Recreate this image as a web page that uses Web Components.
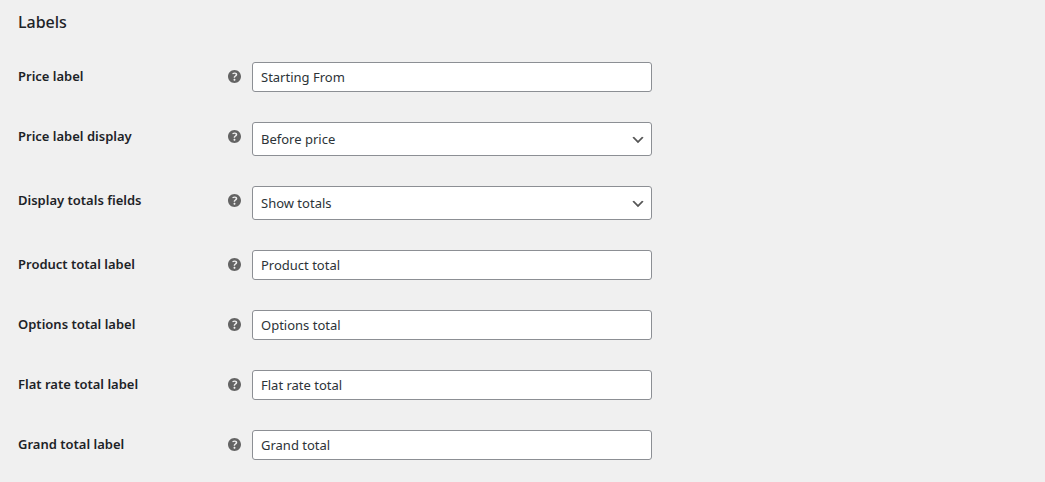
<!DOCTYPE html>
<html lang="en">
<head>
<meta charset="utf-8">
<meta name="viewport" content="width=device-width, initial-scale=1">
<title>Labels</title>
<style>
body { margin: 0; background: #f0f0f0; color: #1d2327; font-family: "Segoe UI", "Noto Sans", "Open Sans", sans-serif; font-size: 13px; }
</style>
</head>
<body>
<settings-section heading="Labels">
  <settings-field name="price_label" label="Price label" value="Starting From"></settings-field>
  <settings-field name="price_display" label="Price label display" options="Before price|After price"></settings-field>
  <settings-field name="display_totals" label="Display totals fields" options="Show totals|Hide totals"></settings-field>
  <settings-field name="product_total" label="Product total label" value="Product total"></settings-field>
  <settings-field name="options_total" label="Options total label" value="Options total"></settings-field>
  <settings-field name="flat_rate_total" label="Flat rate total label" value="Flat rate total"></settings-field>
  <settings-field name="grand_total" label="Grand total label" value="Grand total"></settings-field>
</settings-section>

<template id="section-template">
  <style>
    :host { display: block; padding: 10px 18px 7px; }
    h2 { margin: 0 0 13px; font-size: 16px; line-height: 24px; font-weight: 500; }
  </style>
  <h2></h2>
  <slot></slot>
</template>

<template id="help-template">
  <style>
    :host { display: block; width: 13px; height: 13px; color: #646464; }
    svg { display: block; width: 100%; height: 100%; }
  </style>
  <svg viewBox="3 3 14 14" fill="currentColor" role="img" aria-label="Help"><path d="M17 10c0-3.87-3.14-7-7-7-3.87 0-7 3.13-7 7s3.13 7 7 7c3.86 0 7-3.13 7-7zm-6.3 1.48H9.14v-.43c0-.38.08-.7.24-.98s.46-.57.88-.89c.41-.29.68-.53.81-.71.14-.18.2-.39.2-.62 0-.25-.09-.44-.28-.58-.19-.13-.45-.19-.79-.19-.58 0-1.25.19-2 .57l-.64-1.28c.87-.49 1.8-.74 2.77-.74.81 0 1.45.2 1.92.58.48.39.71.91.71 1.55 0 .43-.09.8-.29 1.11-.19.32-.57.67-1.11 1.06-.38.28-.61.49-.71.63-.1.15-.15.34-.15.57v.35zm-1.47 2.74c-.18-.17-.27-.42-.27-.73 0-.33.08-.58.26-.75s.43-.25.77-.25c.32 0 .57.09.75.26s.27.42.27.74c0 .3-.09.55-.27.72-.18.18-.43.27-.75.27-.33 0-.58-.09-.76-.26z"/></svg>
</template>

<template id="field-template">
  <style>
    :host { display: grid; grid-template-columns: 223px minmax(0, 400px); column-gap: 11px; align-items: start; padding: 15px 0; }
    .head { display: flex; align-items: center; justify-content: space-between; height: 29px; }
    label { font-weight: 600; line-height: 19px; }
    input, select { display: block; box-sizing: border-box; width: 100%; margin: 0; border: 1px solid #8c8f94; border-radius: 3px; background-color: #fff; color: #2c3338; font: inherit; }
    input { height: 30px; padding: 0 8px; }
    select { height: 34px; padding: 0 24px 0 8px; appearance: none; background-image: url('data:image/svg+xml,%3Csvg width="20" height="20" xmlns="http://www.w3.org/2000/svg"%3E%3Cpath d="M5 6l5 5 5-5 2 1-7 7-7-7 2-1z" fill="%23555"/%3E%3C/svg%3E'); background-repeat: no-repeat; background-position: right 5px top 55%; background-size: 16px 16px; }
    input:focus, select:focus { outline: none; border-color: #2271b1; box-shadow: 0 0 0 1px #2271b1; }
  </style>
  <div class="head"><label for="control"></label><help-tip></help-tip></div>
</template>

<script>
const stamp = (host, id) => {
  const root = host.attachShadow({ mode: "open" });
  root.append(document.getElementById(id).content.cloneNode(true));
  return root;
};

customElements.define("help-tip", class extends HTMLElement {
  constructor() { super(); stamp(this, "help-template"); }
});

customElements.define("settings-section", class extends HTMLElement {
  connectedCallback() {
    if (this.shadowRoot) return;
    stamp(this, "section-template").querySelector("h2").textContent = this.getAttribute("heading");
  }
});

customElements.define("settings-field", class extends HTMLElement {
  connectedCallback() {
    if (this.shadowRoot) return;
    const root = stamp(this, "field-template");
    root.querySelector("label").textContent = this.getAttribute("label");
    const options = this.getAttribute("options");
    const control = document.createElement(options ? "select" : "input");
    control.id = "control";
    control.name = this.getAttribute("name");
    if (options) {
      for (const text of options.split("|")) control.add(new Option(text));
    } else {
      control.type = "text";
      control.value = this.getAttribute("value");
    }
    root.append(control);
  }
});
</script>
</body>
</html>
